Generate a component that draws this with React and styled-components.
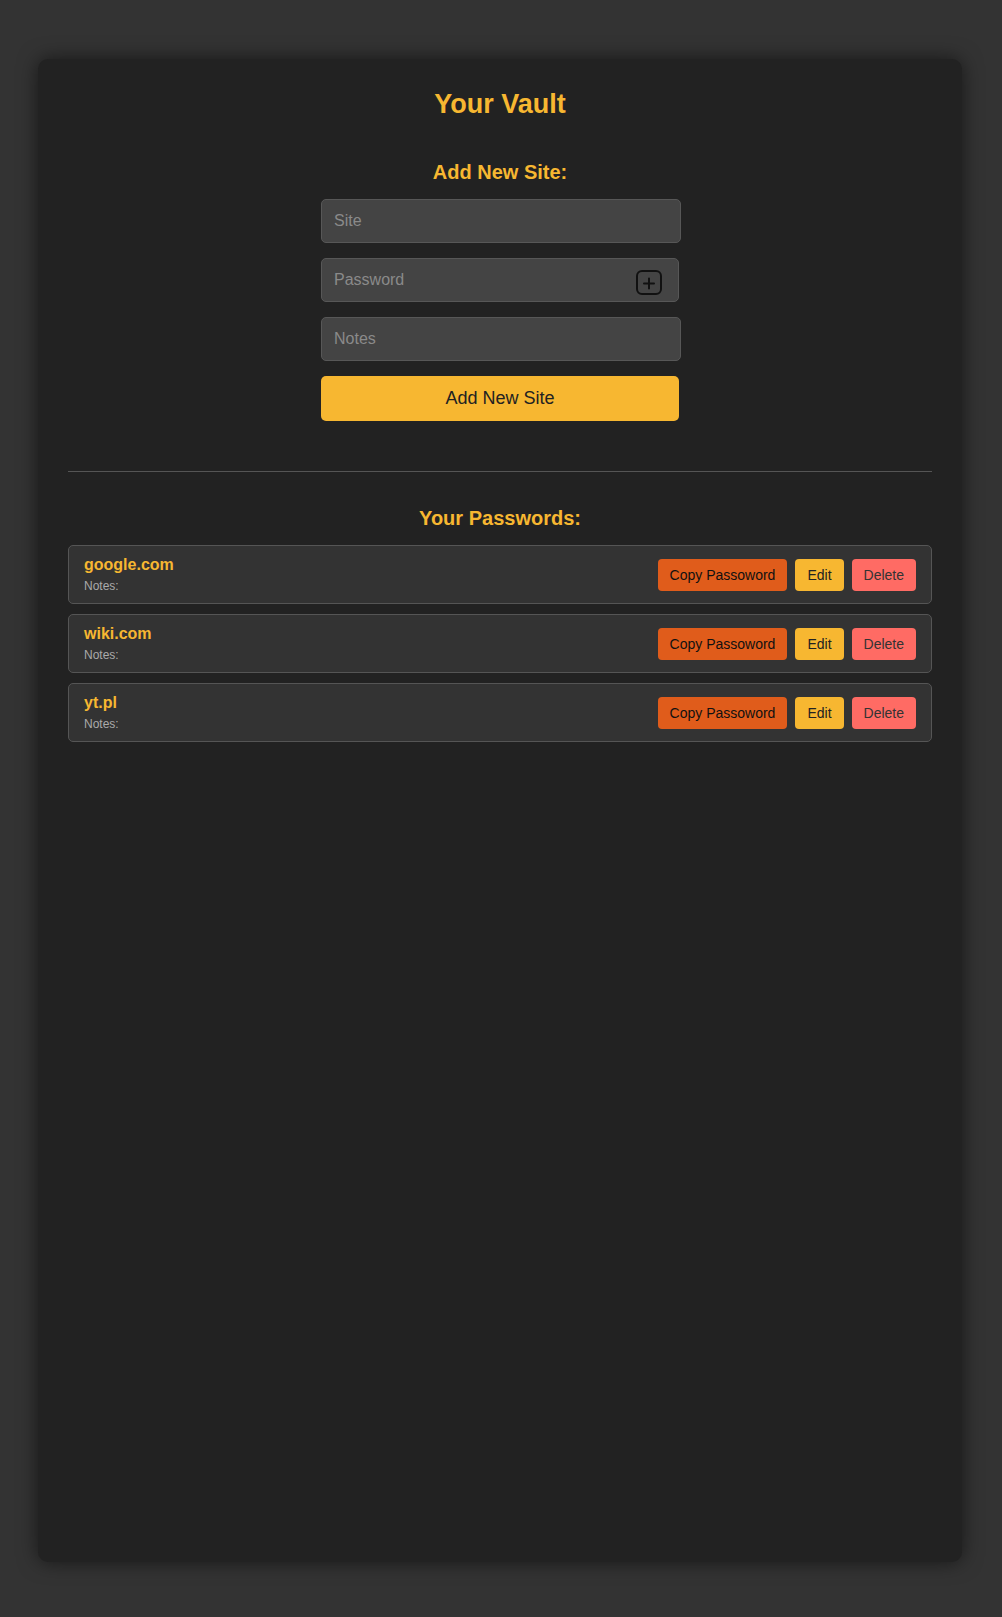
import styled, { createGlobalStyle } from 'styled-components'

const GlobalStyle = createGlobalStyle`
  html, body {
    margin: 0;
    padding: 0;
    background: #333;
    font-family: "Liberation Sans", Arial, sans-serif;
  }
`

const Page = styled.div`
  padding: 59px 0 55px;
`

const Vault = styled.div`
  width: 924px;
  min-height: 1503px;
  box-sizing: border-box;
  margin: 0 auto;
  padding: 30px;
  background: #222;
  border-radius: 10px;
  box-shadow: 0 0 20px rgba(0, 0, 0, 0.55);
  position: relative;
  left: -1px;
`

const Title = styled.h1`
  margin: 0;
  text-align: center;
  color: #f7b731;
  font-size: 27px;
  font-weight: bold;
`

const Heading = styled.h2`
  margin: ${p => p.$top}px 0 15px;
  text-align: center;
  color: #f7b731;
  font-size: 20px;
  font-weight: bold;
`

const Form = styled.div`
  width: 360px;
  margin-left: calc(50% - 179px);
  display: flex;
  flex-direction: column;
  gap: 15px;
`

const Input = styled.input`
  box-sizing: border-box;
  width: ${p => (p.$narrow ? 'calc(100% - 2px)' : '100%')};
  height: 44px;
  padding: 0 12px;
  background: #444;
  border: 1px solid #575757;
  border-radius: 5px;
  color: #eee;
  font-family: inherit;
  font-size: 16px;
  outline: none;

  &::placeholder {
    color: #8a8a8a;
  }
`

const PasswordField = styled.div`
  position: relative;
  display: flex;
`

const IconButton = styled.button`
  position: absolute;
  right: 19px;
  top: 12px;
  padding: 0;
  border: none;
  background: none;
  display: flex;
  cursor: pointer;
`

const SubmitButton = styled.button`
  width: calc(100% - 2px);
  height: 45px;
  border: none;
  border-radius: 5px;
  background: #f7b731;
  color: #222;
  font-family: inherit;
  font-size: 18px;
  cursor: pointer;
`

const Divider = styled.hr`
  margin: 50px 0 0;
  border: none;
  border-top: 1px solid #555;
`

const List = styled.div`
  display: flex;
  flex-direction: column;
  gap: 10px;
`

const Entry = styled.div`
  display: flex;
  align-items: center;
  justify-content: space-between;
  padding: 10px 15px;
  background: #333;
  border: 1px solid #555;
  border-radius: 5px;
`

const SiteName = styled.div`
  color: #f7b731;
  font-size: 16px;
  font-weight: bold;
`

const SiteNotes = styled.div`
  margin-top: 5px;
  color: #aaa;
  font-size: 12px;
`

const Actions = styled.div`
  display: flex;
  gap: 8px;
`

const ActionButton = styled.button`
  height: 32px;
  padding: 0 12px;
  border: none;
  border-radius: 4px;
  background: ${p => p.$bg};
  color: ${p => p.$fg || '#222'};
  font-family: inherit;
  font-size: 14px;
  cursor: pointer;
`

const sites = ['google.com', 'wiki.com', 'yt.pl']

function PlusIcon () {
  return (
    <svg width='26' height='25' viewBox='0 0 26 25' fill='none' stroke='#111' strokeWidth='2' strokeLinecap='round'>
      <rect x='1' y='1' width='24' height='23' rx='5' />
      <path d='M8 13.5h10M13 8.5v10' />
    </svg>
  )
}

function App () {
  return (
    <Page>
      <GlobalStyle />
      <Vault>
        <Title>Your Vault</Title>
        <Heading $top={41}>Add New Site:</Heading>
        <Form>
          <Input placeholder='Site' />
          <PasswordField>
            <Input $narrow placeholder='Password' type='password' />
            <IconButton><PlusIcon /></IconButton>
          </PasswordField>
          <Input placeholder='Notes' />
          <SubmitButton>Add New Site</SubmitButton>
        </Form>
        <Divider />
        <Heading $top={35}>Your Passwords:</Heading>
        <List>
          {sites.map(site => (
            <Entry key={site}>
              <div>
                <SiteName>{site}</SiteName>
                <SiteNotes>Notes:</SiteNotes>
              </div>
              <Actions>
                <ActionButton $bg='#e05c1b' $fg='#111'>Copy Passoword</ActionButton>
                <ActionButton $bg='#f7b731'>Edit</ActionButton>
                <ActionButton $bg='#ff6b64' $fg='#333'>Delete</ActionButton>
              </Actions>
            </Entry>
          ))}
        </List>
      </Vault>
    </Page>
  )
}

export default App
